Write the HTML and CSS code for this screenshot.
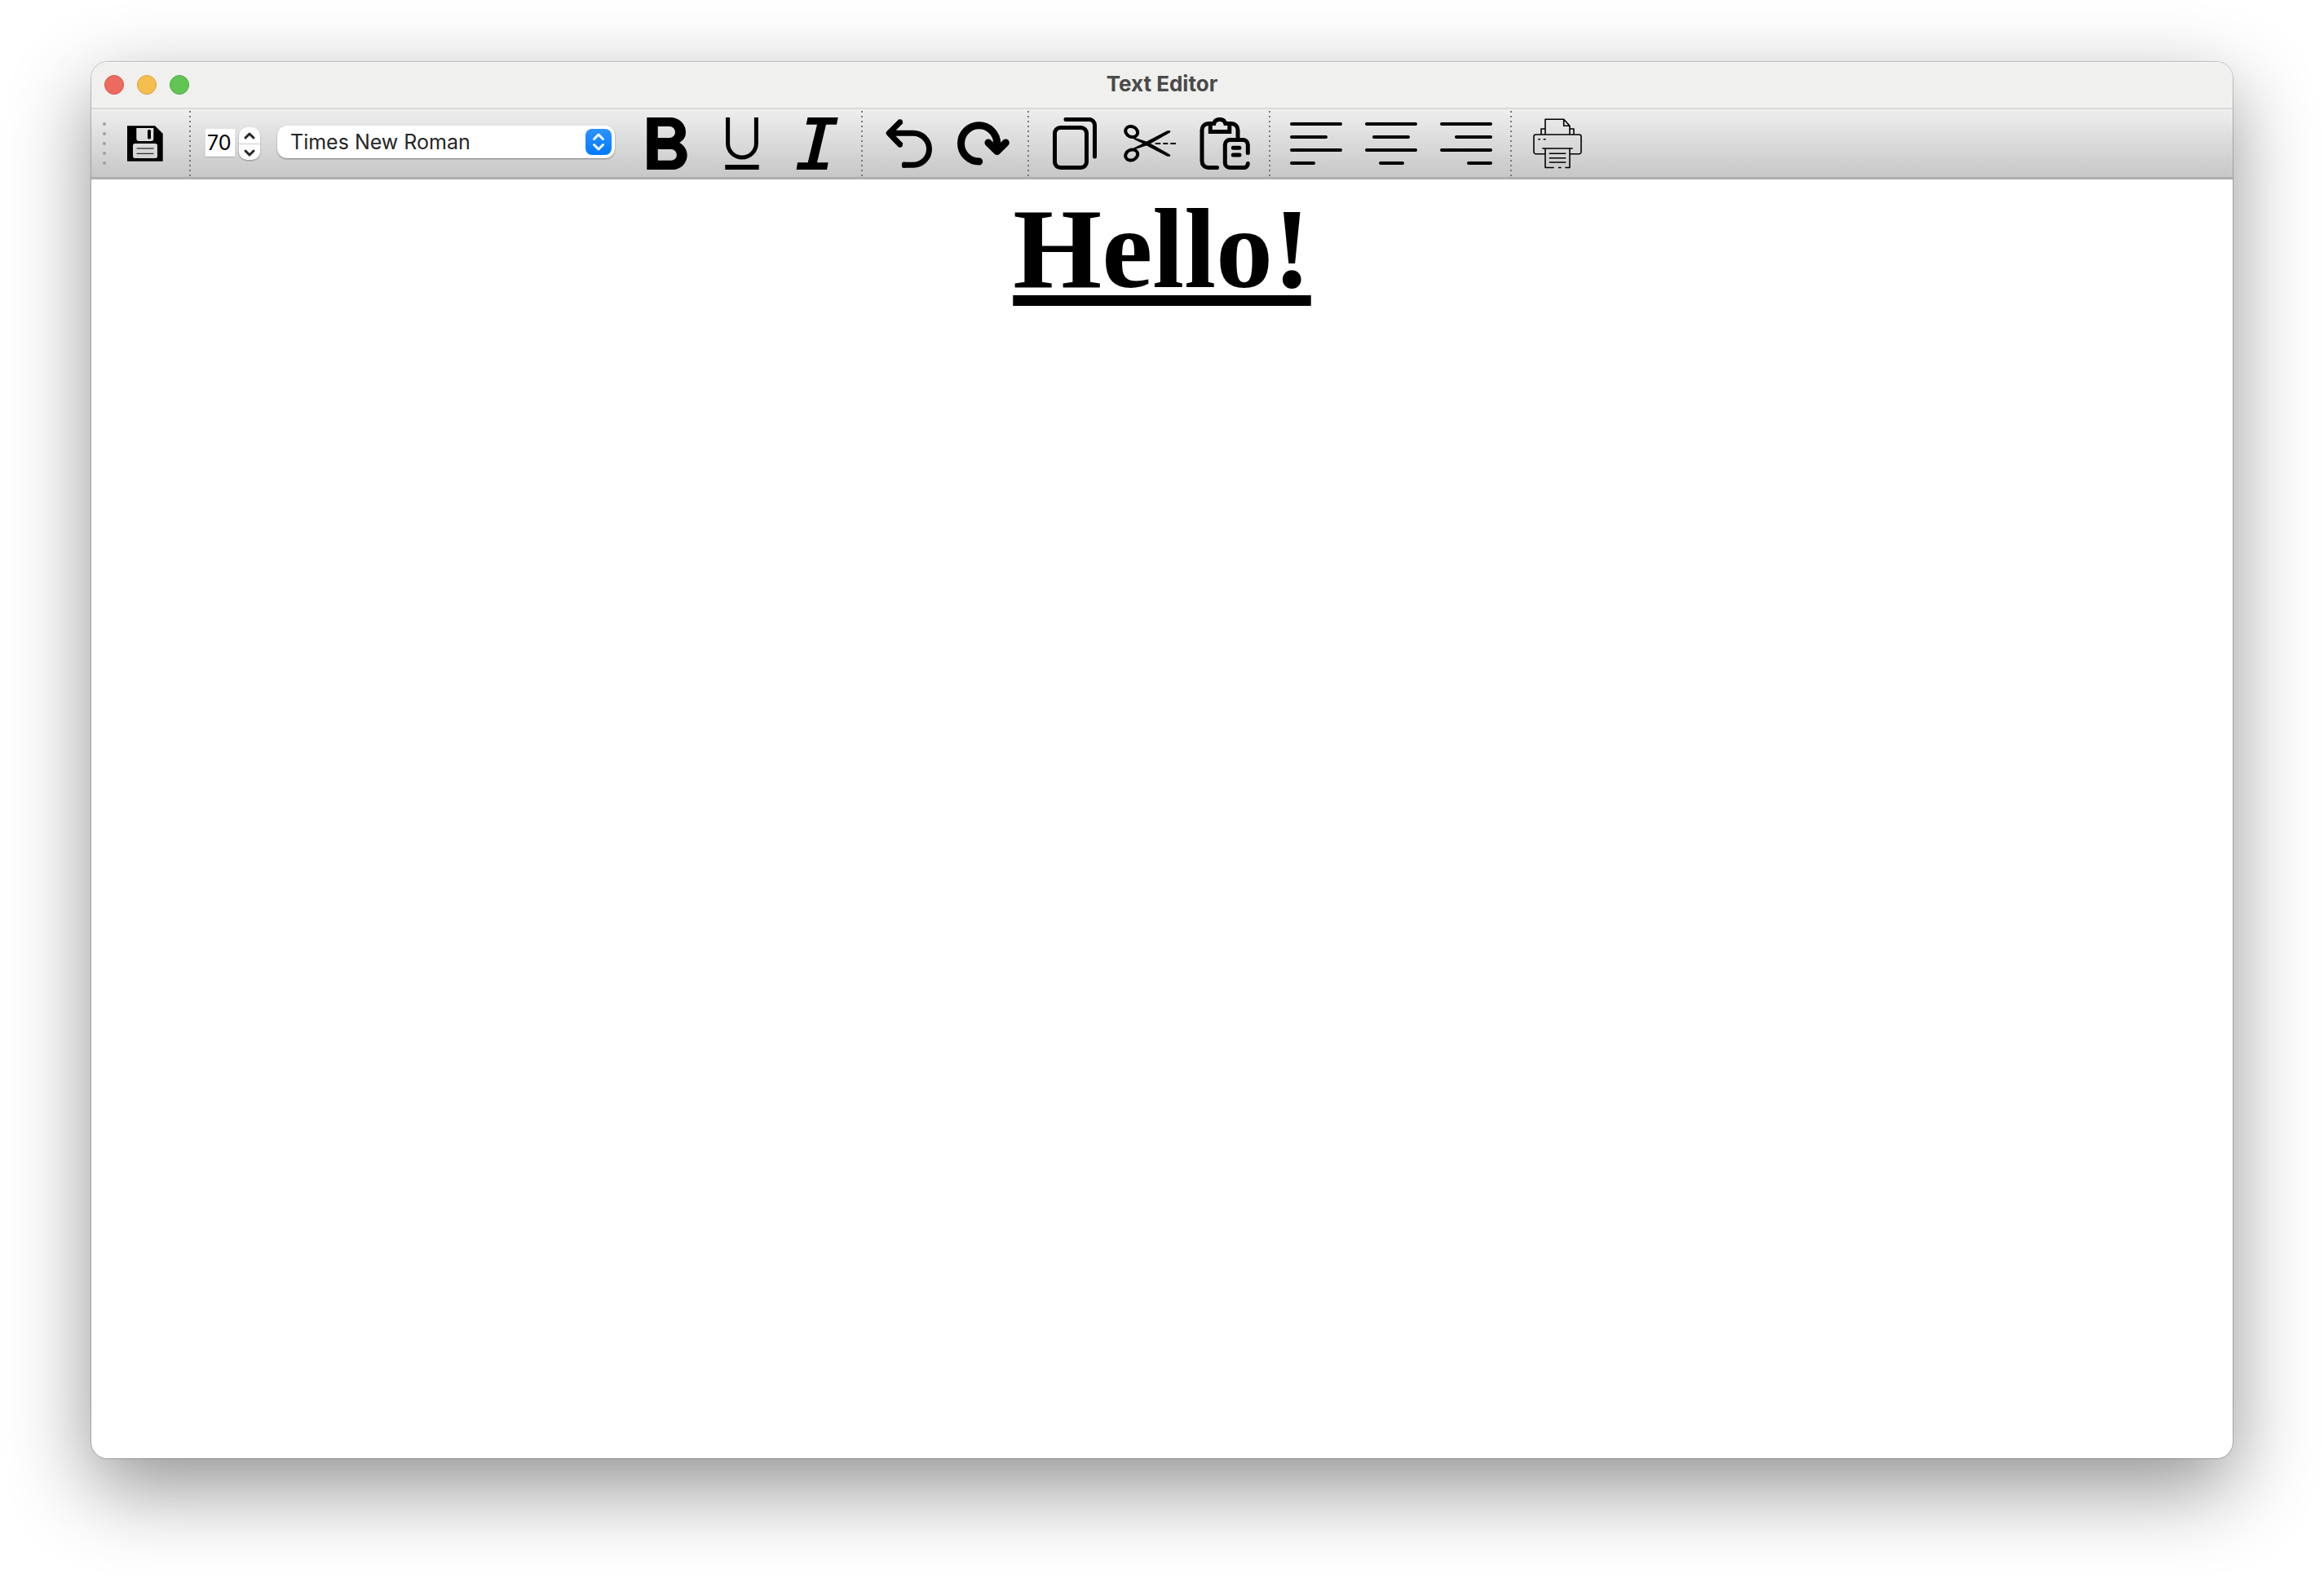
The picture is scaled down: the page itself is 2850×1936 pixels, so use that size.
FILE: index.html
```html
<!DOCTYPE html>
<html lang="en">
<head>
<meta charset="utf-8">
<title>Text Editor</title>
<link rel="stylesheet" href="styles.css">
</head>
<body>
<main class="window">
  <header class="titlebar">
    <div class="lights">
      <button class="light close" aria-label="Close"></button>
      <button class="light minimize" aria-label="Minimize"></button>
      <button class="light zoom" aria-label="Zoom"></button>
    </div>
    <h1 class="title">Text Editor</h1>
  </header>

  <div class="toolbar" role="toolbar" aria-label="Formatting">
    <div class="handle"><i></i><i></i><i></i><i></i><i></i></div>
    <button class="tool" aria-label="Save">
      <svg viewBox="0 0 64 64"><path class="solid" d="M10 10.300H44L53.700 19.700V53.700H10ZM21.300 13V26a3 3 0 0 0 3 3H39.300a3 3 0 0 0 3-3V13ZM19.500 32a2.500 2.500 0 0 0-2.500 2.500V47.500a2.500 2.500 0 0 0 2.500 2.500H44.500a2.500 2.500 0 0 0 2.500-2.500V34.500a2.500 2.500 0 0 0-2.500-2.500Z"/><rect class="solid" x="35" y="15" width="4" height="11.500" rx="1.500"/><path class="line w1" d="M22 38H42M22 44.300H42"/></svg>
    </button>
    <div class="separator"></div>

    <div class="size">
      <input class="size-input" type="text" inputmode="numeric" value="70" aria-label="Font size">
      <div class="stepper">
        <button class="step" aria-label="Increase font size"><svg viewBox="0 0 26 20"><path class="line dark" d="M8 13L13 8L18 13"/></svg></button>
        <button class="step down" aria-label="Decrease font size"><svg viewBox="0 0 26 20"><path class="line dark" d="M8 8L13 13L18 8"/></svg></button>
      </div>
    </div>

    <div class="family">
      <select class="family-select" aria-label="Font family">
        <option>Times New Roman</option>
      </select>
      <svg class="family-arrows" viewBox="0 0 32 32" aria-hidden="true"><path class="line white" d="M10.500 12.500L16 7L21.500 12.500M10.500 19.500L16 25L21.500 19.500"/></svg>
    </div>

    <button class="tool" aria-label="Bold">
      <svg viewBox="0 0 64 64"><path class="solid" d="M7.300 0H36C47 0 55 8 55 18C55 24 52 28 47.300 31C53 34 56.700 40 56.700 46C56.700 56 49 64 39 64H7.300ZM20.700 11V25H35a7 7 0 0 0 0-14ZM20.700 39V52.800H37a6.900 6.900 0 0 0 0-13.800Z"/></svg>
    </button>
    <button class="tool" aria-label="Underline">
      <svg viewBox="0 0 64 64"><path class="line butt w5" d="M14.600 0V31.700a17.400 17.400 0 0 0 34.800 0V0"/><path class="solid" d="M11.300 58H52.700V64H11.300Z"/></svg>
    </button>
    <button class="tool" aria-label="Italic">
      <svg viewBox="0 0 64 64"><path class="solid" d="M20.500 0H57.700L56 8.700H43L32 55.300H45.700L44 64H6.700L8 55.300H20.700L32 8.700H18.700Z"/></svg>
    </button>
    <div class="separator"></div>

    <button class="tool" aria-label="Undo">
      <svg viewBox="0 0 64 64"><path class="line butt w7" d="M23 4.500L8.200 19.300L23 34.500M9 19.300H38a19.500 19.500 0 0 1 0 39H26"/><path class="line w5" d="M22.500 5L21 6.500M22.500 34L21 32.500M26.500 57V59.500"/></svg>
    </button>
    <button class="tool" aria-label="Redo">
      <svg viewBox="0 0 64 64"><path class="line w9" d="M26.700 54A22.100 22.100 0 1 1 48.700 32V38M38 31L48.700 41.500L59.300 31"/></svg>
    </button>
    <div class="separator"></div>

    <button class="tool" aria-label="Copy">
      <svg viewBox="0 0 64 64"><rect class="line w5" x="7.500" y="12.500" width="39" height="49" rx="7"/><path class="line w5" d="M21 2.400H49.500a7 7 0 0 1 7 7V48"/></svg>
    </button>
    <button class="tool" aria-label="Cut">
      <svg viewBox="0 0 64 64"><ellipse class="line w4" cx="9.700" cy="17.500" rx="7.700" ry="6.300" transform="rotate(25 9.700 17.500)"/><ellipse class="line w4" cx="9.700" cy="46" rx="7.700" ry="6.300" transform="rotate(-25 9.700 46)"/><path class="solid" d="M11 24L28 29.500L53 16.500Q56 15.500 57.500 17Q57 18.500 56 19L33 32L56 45Q57 46 57.500 47Q56 48.500 53 47.500L28 34.500L11 40L13 37L23.500 32L13 27Z"/><path class="line butt w2" d="M38.700 32H45.300M48.300 32H54.300M57.300 32H64"/></svg>
    </button>
    <button class="tool" aria-label="Paste">
      <svg viewBox="0 0 64 64"><path class="line w5" d="M22.500 61.500H12a8 8 0 0 1-8-8V15.500a8 8 0 0 1 8-8H17M36 7.500H40a8 8 0 0 1 8 8V26"/><path class="line miter" d="M14.300 7.500H18.800C19.500 4.500 22 2.400 25.800 2.400S32 4.500 32.800 7.500H37.800V17.500H14.300Z"/><path class="line w5" d="M60.300 43.500V33.500a6 6 0 0 0-6-6H38.300a6 6 0 0 0-6 6V55.500a6 6 0 0 0 6 6H54.500a5 5 0 0 0 5.800-5M42.300 37.300H50M42.300 46H50"/></svg>
    </button>
    <div class="separator"></div>

    <button class="tool" aria-label="Align left">
      <svg viewBox="0 0 64 64"><path class="line w4" d="M2 8H62M2 24H44M2 40H62M2 56H29"/></svg>
    </button>
    <button class="tool" aria-label="Align center">
      <svg viewBox="0 0 64 64"><path class="line w4" d="M2 8H62M11 24H53M2 40H62M19 56H46"/></svg>
    </button>
    <button class="tool" aria-label="Align right">
      <svg viewBox="0 0 64 64"><path class="line w4" d="M2 8H62M20 24H62M2 40H62M35 56H62"/></svg>
    </button>
    <div class="separator"></div>

    <button class="tool" aria-label="Print">
      <svg viewBox="0 0 64 64"><path class="line butt thin" d="M17 21V2.300H39.700L47 10.300V21M39.700 2.300V10.300H47M12 21V14H17M47 14H52V21M17 44.700H5.500A2.500 2.500 0 0 1 3 42.200V23.500A2.500 2.500 0 0 1 5.500 21H58.500A2.500 2.500 0 0 1 61 23.500V42.200A2.500 2.500 0 0 1 58.500 44.700H47M8.300 26.700H11M14.700 26.700H17.700M13.300 38H50.700M27.700 61.500H17V38M47 38V61.500H41.300M33 61.500H36.700M21.700 44.300H42.300M21.700 49.700H42.300M21.700 55H42.300"/></svg>
    </button>
  </div>

  <div class="document" contenteditable="true" role="textbox" aria-multiline="true" aria-label="Document" spellcheck="false"><p class="paragraph">Hello!</p></div>
</main>
</body>
</html>
```
FILE: styles.css
```css
* {
  box-sizing: border-box;
}

body {
  margin: 0;
  min-height: 100vh;
  padding: 76px 112px 148px;
  display: flex;
  background: #fff;
  font-family: Inter, "Liberation Sans", sans-serif;
}

button {
  padding: 0;
  border: 0;
  background: none;
}

svg {
  display: block;
}

.window {
  flex: 1;
  min-width: 0;
  display: flex;
  flex-direction: column;
  border-radius: 20px;
  overflow: hidden;
  background: #fff;
  box-shadow: 0 0 0 1px rgba(0, 0, 0, 0.2), 0 36px 100px rgba(0, 0, 0, 0.43);
}

/* Title bar */
.titlebar {
  display: grid;
  grid-template-columns: 1fr auto 1fr;
  align-items: center;
  height: 58px;
  padding: 0 16px;
  border-bottom: 2px solid #d9d9d8;
  background: #f0f0ee;
  box-shadow: inset 0 1px #fafafa;
}

.lights {
  display: flex;
  gap: 16px;
}

.light {
  width: 24px;
  height: 24px;
  border: 1px solid;
  border-radius: 50%;
}

.close {
  background: #ed6a5e;
  border-color: #d55549;
}

.minimize {
  background: #f5bf4f;
  border-color: #d9a13c;
}

.zoom {
  background: #61c554;
  border-color: #52a842;
}

.title {
  margin: 0;
  padding-bottom: 2px;
  font-size: 26px;
  line-height: 32px;
  font-weight: 700;
  color: #4a4a49;
}

/* Toolbar */
.toolbar {
  display: flex;
  align-items: center;
  height: 86px;
  border-bottom: 3px solid #aeaeae;
  background: linear-gradient(#eeeeee, #c7c7c7);
}

.handle {
  width: 20px;
  padding-left: 14px;
  display: grid;
  gap: 8px;
}

.handle i {
  width: 4px;
  height: 4px;
  border-radius: 50%;
  background: #a0a0a0;
}

.tool {
  width: 92px;
  height: 80px;
  display: grid;
  place-items: center;
}

.tool svg {
  width: 64px;
  height: 64px;
}

.separator {
  width: 20px;
  height: 80px;
  background: repeating-linear-gradient(#777 0 2px, transparent 2px 6px) 8px 0 / 2px 100% no-repeat;
}

.size {
  display: flex;
  align-items: center;
  gap: 5px;
  margin: 0 21px 0 8px;
}

.size-input {
  width: 36px;
  height: 35px;
  padding: 0 2px;
  border: 0;
  border-bottom: 1px solid #aaa;
  background: #fff;
  font: 25px/32px Inter, "Liberation Sans", sans-serif;
  color: #000;
}

.stepper {
  width: 26px;
  height: 40px;
  border-radius: 10px;
  overflow: hidden;
  background: #fff;
  box-shadow: 0 1px 2px rgba(0, 0, 0, 0.35);
}

.step {
  display: block;
  width: 26px;
  height: 20px;
}

.down {
  border-top: 1px solid #ccc;
}

.family {
  display: grid;
  width: 414px;
  margin-right: 18px;
  padding-bottom: 4px;
  align-items: center;
}

.family-select,
.family-arrows {
  grid-area: 1 / 1;
}

.family-select {
  appearance: none;
  height: 40px;
  width: 100%;
  padding: 0 48px 0 16px;
  border: 0;
  border-radius: 12px;
  background: #fff;
  box-shadow: 0 1px 2px rgba(0, 0, 0, 0.4);
  font: 25px/32px Inter, "Liberation Sans", sans-serif;
  color: #262626;
}

.family-arrows {
  justify-self: end;
  width: 32px;
  height: 32px;
  margin-right: 4px;
  border-radius: 8px;
  background: linear-gradient(#2e93ff, #007aff);
  pointer-events: none;
}

/* Icon strokes */
.solid {
  fill: #000;
  fill-rule: evenodd;
}

.line {
  fill: none;
  stroke: #000;
  stroke-linecap: round;
  stroke-linejoin: round;
}

.butt {
  stroke-linecap: butt;
}

.w1 { stroke-width: 1; }
.w2 { stroke-width: 2; }
.w4 { stroke-width: 4; }
.w5 { stroke-width: 5; }
.w7 { stroke-width: 7; }
.w9 { stroke-width: 9; }

.thin {
  stroke-width: 1.6;
}

.miter {
  stroke-width: 5;
  stroke-linejoin: miter;
}

.dark {
  stroke: #262626;
  stroke-width: 3;
}

.white {
  stroke: #fff;
  stroke-width: 3;
}

/* Document */
.document {
  flex: 1;
  padding: 4px 8px;
  outline: 0;
  font-family: "Liberation Serif", "Times New Roman", serif;
  color: #000;
}

.paragraph {
  margin: 0;
  font-size: 140px;
  line-height: 161px;
  font-weight: 700;
  text-align: center;
  text-decoration: underline 13px;
  text-decoration-skip-ink: none;
  text-underline-offset: 10px;
}
```
